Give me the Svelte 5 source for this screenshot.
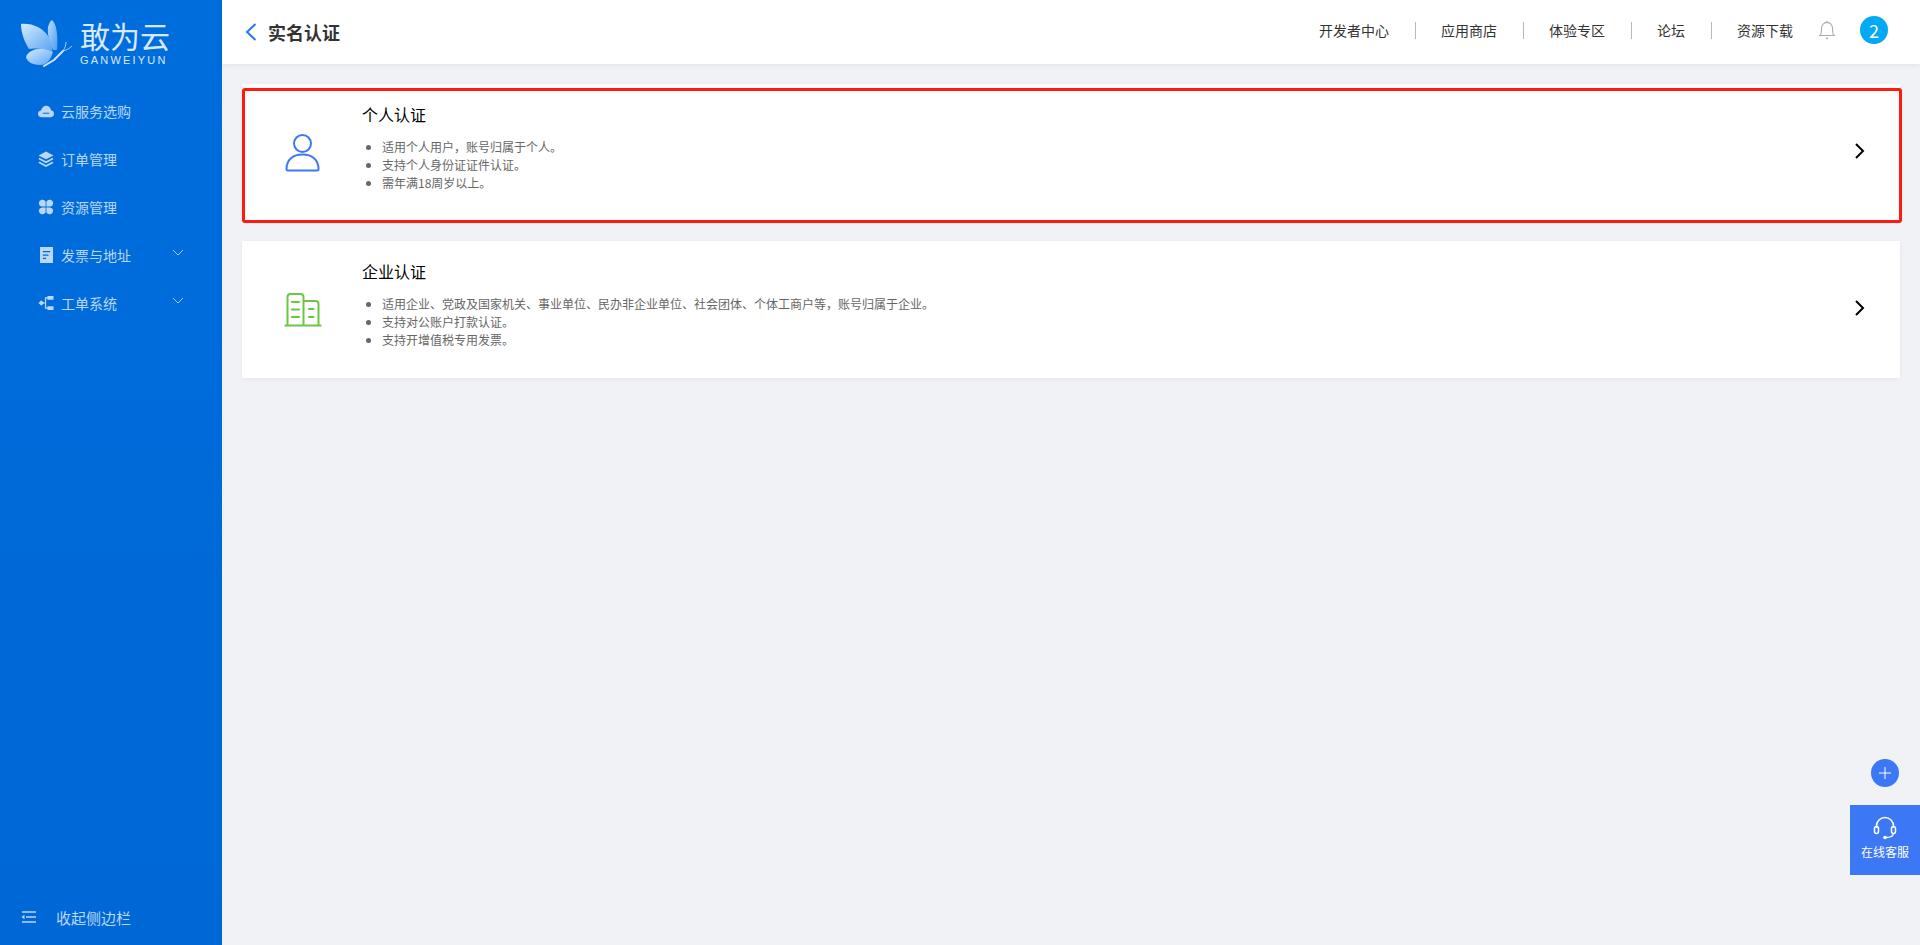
<script>
  const navItems = [
    { label: '云服务选购', icon: 'cloud' },
    { label: '订单管理', icon: 'layers' },
    { label: '资源管理', icon: 'clover' },
    { label: '发票与地址', icon: 'doc', arrow: true },
    { label: '工单系统', icon: 'tree', arrow: true }
  ];

  const topLinks = ['开发者中心', '应用商店', '体验专区', '论坛', '资源下载'];

  const cards = [
    {
      title: '个人认证',
      kind: 'person',
      lines: ['适用个人用户，账号归属于个人。', '支持个人身份证证件认证。', '需年满18周岁以上。']
    },
    {
      title: '企业认证',
      kind: 'company',
      lines: [
        '适用企业、党政及国家机关、事业单位、民办非企业单位、社会团体、个体工商户等，账号归属于企业。',
        '支持对公账户打款认证。',
        '支持开增值税专用发票。'
      ]
    }
  ];
</script>

<div class="app">
  <aside class="sidebar">
    <div class="logo">
      <svg class="butterfly" width="54" height="50" viewBox="0 0 54 50">
        <defs>
          <linearGradient id="wing" x1="0" y1="0" x2="1" y2="1">
            <stop offset="0" stop-color="#d4ecfd" />
            <stop offset="1" stop-color="#5aa5f5" />
          </linearGradient>
          <linearGradient id="wing2" x1="0" y1="0" x2="1" y2="1">
            <stop offset="0" stop-color="#bcdcfb" />
            <stop offset="1" stop-color="#4c9df4" />
          </linearGradient>
        </defs>
        <path d="M32 1 C37 5 38 18 37 31 L33 31 C30 24 27 16 28 8 C29 5 30 2 32 1Z" fill="url(#wing2)" />
        <path d="M1 5 C12 4 23 9 28 17 C31 22 33 27 32 32 C24 29 14 29 9 30 C4 22 1 13 1 5Z" fill="url(#wing)" />
        <path d="M6 38 C8 32 16 29 24 30 C29 31 32 32 33 33 C31 40 27 46 20 46 C13 46 7 43 6 38Z" fill="url(#wing)" />
        <path d="M24 47 L34 41 L43 32" fill="none" stroke="#cfe5fc" stroke-width="2" stroke-linecap="round" />
        <path d="M43 32 C47 31 50 29 52 27 M43 32 C45 29 46 26 46 23" fill="none" stroke="#a9d0f8" stroke-width="1" />
      </svg>
      <div class="brand">
        <div class="brand-cn">敢为云</div>
        <div class="brand-en">GANWEIYUN</div>
      </div>
    </div>

    <nav class="nav">
      {#each navItems as item}
        <div class="nav-item">
          <span class="nav-icon">
            {#if item.icon === 'cloud'}
              <svg width="18" height="16" viewBox="0 0 18 16">
                <path fill="#b9d8f8" fill-rule="evenodd" d="M4.2 15 C1.7 15 0 13.2 0 11 C0 9 1.5 7.5 3.4 7.3 C4.1 4.4 6.4 2 9.2 2 C12 2 14.2 4.2 14.7 7.2 C16.6 7.5 18 9 18 11 C18 13.2 16.3 15 14 15Z M5.5 9.9 V11.1 H12.5 V9.9Z" />
              </svg>
            {:else if item.icon === 'layers'}
              <svg width="16" height="16" viewBox="0 0 16 16">
                <path fill="#b9d8f8" d="M8 0.5 L15.5 4.4 L8 8.3 L0.5 4.4Z" />
                <path fill="none" stroke="#b9d8f8" stroke-width="1.7" d="M1 7.6 L8 11.2 L15 7.6 M1 11.2 L8 15 L15 11.2" />
              </svg>
            {:else if item.icon === 'clover'}
              <svg width="16" height="16" viewBox="0 0 16 16">
                <path fill="#b9d8f8" d="M0.8 4.4 A3.7 3.7 0 0 1 7.6 2.4 V7.6 H4 A3.7 3.7 0 0 1 0.8 4.4Z M15.2 4.4 A3.7 3.7 0 0 0 8.4 2.4 V7.6 H12 A3.7 3.7 0 0 0 15.2 4.4Z M0.8 11.6 A3.7 3.7 0 0 0 7.6 13.6 V8.4 H4 A3.7 3.7 0 0 0 0.8 11.6Z M15.2 11.6 A3.7 3.7 0 0 1 8.4 13.6 V8.4 H12 A3.7 3.7 0 0 1 15.2 11.6Z" />
              </svg>
            {:else if item.icon === 'doc'}
              <svg width="16" height="16" viewBox="0 0 16 16">
                <path fill="#b9d8f8" fill-rule="evenodd" d="M2 0 H15 V16 H2Z M4.8 4 V5.3 H12.2 V4Z M4.8 7.4 V8.7 H10.5 V7.4Z M4.8 10.8 V12.1 H8 V10.8Z" />
              </svg>
            {:else}
              <svg width="17" height="16" viewBox="0 0 17 16">
                <path fill="#b9d8f8" d="M0.5 8 L3.5 5.2 L6.5 8 L3.5 10.8Z M10 0.5 H16.5 V4.5 H10Z M10 11.5 H16.5 V15.5 H10Z" />
                <path fill="none" stroke="#b9d8f8" stroke-width="1.3" d="M5.5 8 H8 M10.5 2.5 H8 V13.5 H10.5" />
              </svg>
            {/if}
          </span>
          <span class="nav-label">{item.label}</span>
          {#if item.arrow}
            <svg class="nav-arrow" width="12" height="8" viewBox="0 0 12 8">
              <path d="M1 1 L6 6 L11 1" fill="none" stroke="#a5cbf5" stroke-width="1" />
            </svg>
          {/if}
        </div>
      {/each}
    </nav>

    <div class="collapse">
      <svg width="15" height="12" viewBox="0 0 15 12">
        <path d="M1 1 H15 M5 6 H15 M1 11 H15" stroke="#b9d8f8" stroke-width="1.5" fill="none" />
        <path d="M0.5 6 L3.5 3.8 V8.2Z" fill="#b9d8f8" />
      </svg>
      <span>收起侧边栏</span>
    </div>
  </aside>

  <div class="main">
    <header class="topbar">
      <div class="page-title">
        <svg width="12" height="18" viewBox="0 0 12 18">
          <path d="M10.5 1 L2 9 L10.5 17" fill="none" stroke="#2b79f0" stroke-width="2" />
        </svg>
        <span>实名认证</span>
      </div>
      <div class="top-right">
        {#each topLinks as link, i}
          {#if i > 0}<span class="sep"></span>{/if}
          <span class="top-link">{link}</span>
        {/each}
        <svg class="bell" width="18" height="20" viewBox="0 0 18 20">
          <path d="M2 15.5 C3.5 14 3.5 12 3.5 8.5 C3.5 5 6 2.4 9 2.4 C12 2.4 14.5 5 14.5 8.5 C14.5 12 14.5 14 16 15.5Z M0.8 15.5 H17.2" fill="none" stroke="#a9adb3" stroke-width="1.1" />
          <circle cx="9" cy="18.2" r="1" fill="#a9adb3" />
          <path d="M9 0.8 V2.4" stroke="#a9adb3" stroke-width="1.1" />
        </svg>
        <span class="avatar">2</span>
      </div>
    </header>

    <section class="content">
      {#each cards as card, i}
        <div class="card">
          <div class="card-icon">
            {#if card.kind === 'person'}
              <svg width="36" height="38" viewBox="0 0 36 38">
                <circle cx="17.5" cy="9.5" r="8.5" fill="none" stroke="#3c78f5" stroke-width="2" />
                <path d="M1.5 35 C1.5 25.5 8 20.5 17.5 20.5 S33.5 25.5 33.5 35 A1.5 1.5 0 0 1 32 36.5 H3 A1.5 1.5 0 0 1 1.5 35Z" fill="none" stroke="#3c78f5" stroke-width="2" />
              </svg>
            {:else}
              <svg width="38" height="34" viewBox="0 0 38 34">
                <path d="M3.5 32 V4 A3 3 0 0 1 6.5 1 H16.5 A3 3 0 0 1 19.5 4 V32 M19.5 8 H31.5 A3 3 0 0 1 34.5 11 V32" fill="none" stroke="#6cc644" stroke-width="2" />
                <path d="M0.5 32.5 H37.5" stroke="#6cc644" stroke-width="2" />
                <path d="M8 9 H15 M8 16.5 H15 M8 24 H15 M25 16 H29.5 M25 24 H29.5" stroke="#6cc644" stroke-width="2.2" stroke-linecap="round" />
              </svg>
            {/if}
          </div>
          <div class="card-body">
            <div class="card-title">{card.title}</div>
            <ul>
              {#each card.lines as line}
                <li>{line}</li>
              {/each}
            </ul>
          </div>
          <svg class="card-arrow" width="12" height="18" viewBox="0 0 12 18">
            <path d="M2 2 L9 9 L2 16" fill="none" stroke="#000" stroke-width="2" />
          </svg>
          {#if i === 0}<div class="highlight"></div>{/if}
        </div>
      {/each}
    </section>
  </div>

  <div class="plus">
    <svg width="12" height="12" viewBox="0 0 12 12">
      <path d="M6 0 V12 M0 6 H12" stroke="#fff" stroke-width="1" />
    </svg>
  </div>
  <div class="service">
    <svg width="24" height="24" viewBox="0 0 24 24">
      <path d="M3.5 12 V10 A8.5 8.5 0 0 1 20.5 10 V12" fill="none" stroke="#fff" stroke-width="1.6" />
      <rect x="1.5" y="10.5" width="4" height="7" rx="2" fill="none" stroke="#fff" stroke-width="1.5" />
      <rect x="18.5" y="10.5" width="4" height="7" rx="2" fill="none" stroke="#fff" stroke-width="1.5" />
      <path d="M20.5 17.5 C20 20.5 17 21.5 13 21.5" fill="none" stroke="#fff" stroke-width="1.4" />
      <circle cx="12" cy="21.5" r="1.8" fill="#fff" />
    </svg>
    <span>在线客服</span>
  </div>
</div>

<style>
  :global(body) {
    background: #f0f2f5;
    font-family: "Noto Sans CJK SC", "Noto Sans", sans-serif;
  }

  .app {
    display: flex;
    height: 100vh;
    overflow: hidden;
  }

  .sidebar {
    width: 222px;
    flex-shrink: 0;
    display: flex;
    flex-direction: column;
    background: linear-gradient(180deg, #006ddd 0%, #0067d6 100%);
  }

  .logo {
    display: flex;
    height: 87px;
    padding: 19px 0 0 20px;
    box-sizing: border-box;
  }

  .butterfly {
    flex-shrink: 0;
  }

  .brand {
    margin-left: 6px;
    color: #d6e9fd;
  }

  .brand-cn {
    font-size: 30px;
    line-height: 30px;
    font-weight: 400;
    margin-top: 1px;
  }

  .brand-en {
    font-family: "Liberation Sans", sans-serif;
    font-size: 11px;
    line-height: 11px;
    letter-spacing: 2.2px;
    margin-top: 5px;
    white-space: nowrap;
  }

  .nav {
    flex: 1;
  }

  .nav-item {
    display: flex;
    align-items: center;
    height: 48px;
    padding-left: 38px;
    color: #b9d8f8;
    font-size: 14px;
  }

  .nav-icon {
    width: 16px;
    height: 16px;
    margin-right: 7px;
    display: flex;
  }

  .nav-arrow {
    margin-left: auto;
    margin-right: 38px;
    margin-top: -4px;
  }

  .collapse {
    display: flex;
    align-items: center;
    height: 54px;
    margin-bottom: 1px;
    padding: 0 0 0 21px;
    color: #b9d8f8;
    font-size: 15px;
    gap: 20px;
  }

  .main {
    flex: 1;
    min-width: 0;
    display: flex;
    flex-direction: column;
  }

  .topbar {
    height: 64px;
    flex-shrink: 0;
    display: flex;
    align-items: center;
    justify-content: space-between;
    background: #fff;
    box-shadow: 0 1px 6px rgba(0, 0, 0, 0.07);
    padding: 0 32px 0 23px;
    position: relative;
  }

  .page-title {
    display: flex;
    align-items: center;
    gap: 11px;
    font-size: 18px;
    font-weight: 700;
    color: #333;
  }

  .top-right {
    display: flex;
    align-items: center;
    font-size: 14px;
    color: #333;
    margin-bottom: 4px;
  }

  .sep {
    width: 1px;
    height: 17px;
    margin: 0 25.5px;
    background: #b5b8bd;
  }

  .bell {
    margin-left: 25px;
    margin-right: 24px;
  }

  .avatar {
    width: 28px;
    height: 28px;
    border-radius: 50%;
    background: #03a9f4;
    color: #fff;
    font-size: 18px;
    display: flex;
    align-items: center;
    justify-content: center;
  }

  .content {
    flex: 1;
    padding: 20px 20px 0;
    display: flex;
    flex-direction: column;
    gap: 20px;
  }

  .card {
    position: relative;
    height: 137px;
    display: flex;
    align-items: flex-start;
    background: #fff;
    box-shadow: 0 1px 4px rgba(0, 0, 0, 0.05);
  }

  .card-icon {
    width: 38px;
    height: 137px;
    margin: 0 40px 0 42px;
    display: flex;
    align-items: center;
    justify-content: center;
    flex-shrink: 0;
  }

  .card-body {
    flex: 1;
    padding-top: 19px;
  }

  .card-title {
    font-size: 16px;
    line-height: 22px;
    color: #000;
  }

  .card-body ul {
    margin: 13px 0 0;
    padding: 0 0 0 20px;
    font-size: 12px;
    line-height: 18px;
    color: #666;
  }

  .card-arrow {
    align-self: center;
    margin-right: 34px;
    margin-top: -3px;
  }

  .highlight {
    position: absolute;
    left: 0;
    right: -2px;
    top: 4px;
    height: 135px;
    box-sizing: border-box;
    border: 3px solid #ff1a10;
    border-radius: 3px;
  }

  .plus {
    position: fixed;
    left: 1871px;
    top: 759px;
    width: 28px;
    height: 28px;
    border-radius: 50%;
    background: #3c78f5;
    display: flex;
    align-items: center;
    justify-content: center;
  }

  .service {
    position: fixed;
    right: 0;
    top: 805px;
    width: 70px;
    height: 70px;
    background: #3c78f5;
    color: #fff;
    font-size: 12px;
    display: flex;
    flex-direction: column;
    align-items: center;
    padding-top: 11px;
    box-sizing: border-box;
    gap: 3px;
  }
</style>
